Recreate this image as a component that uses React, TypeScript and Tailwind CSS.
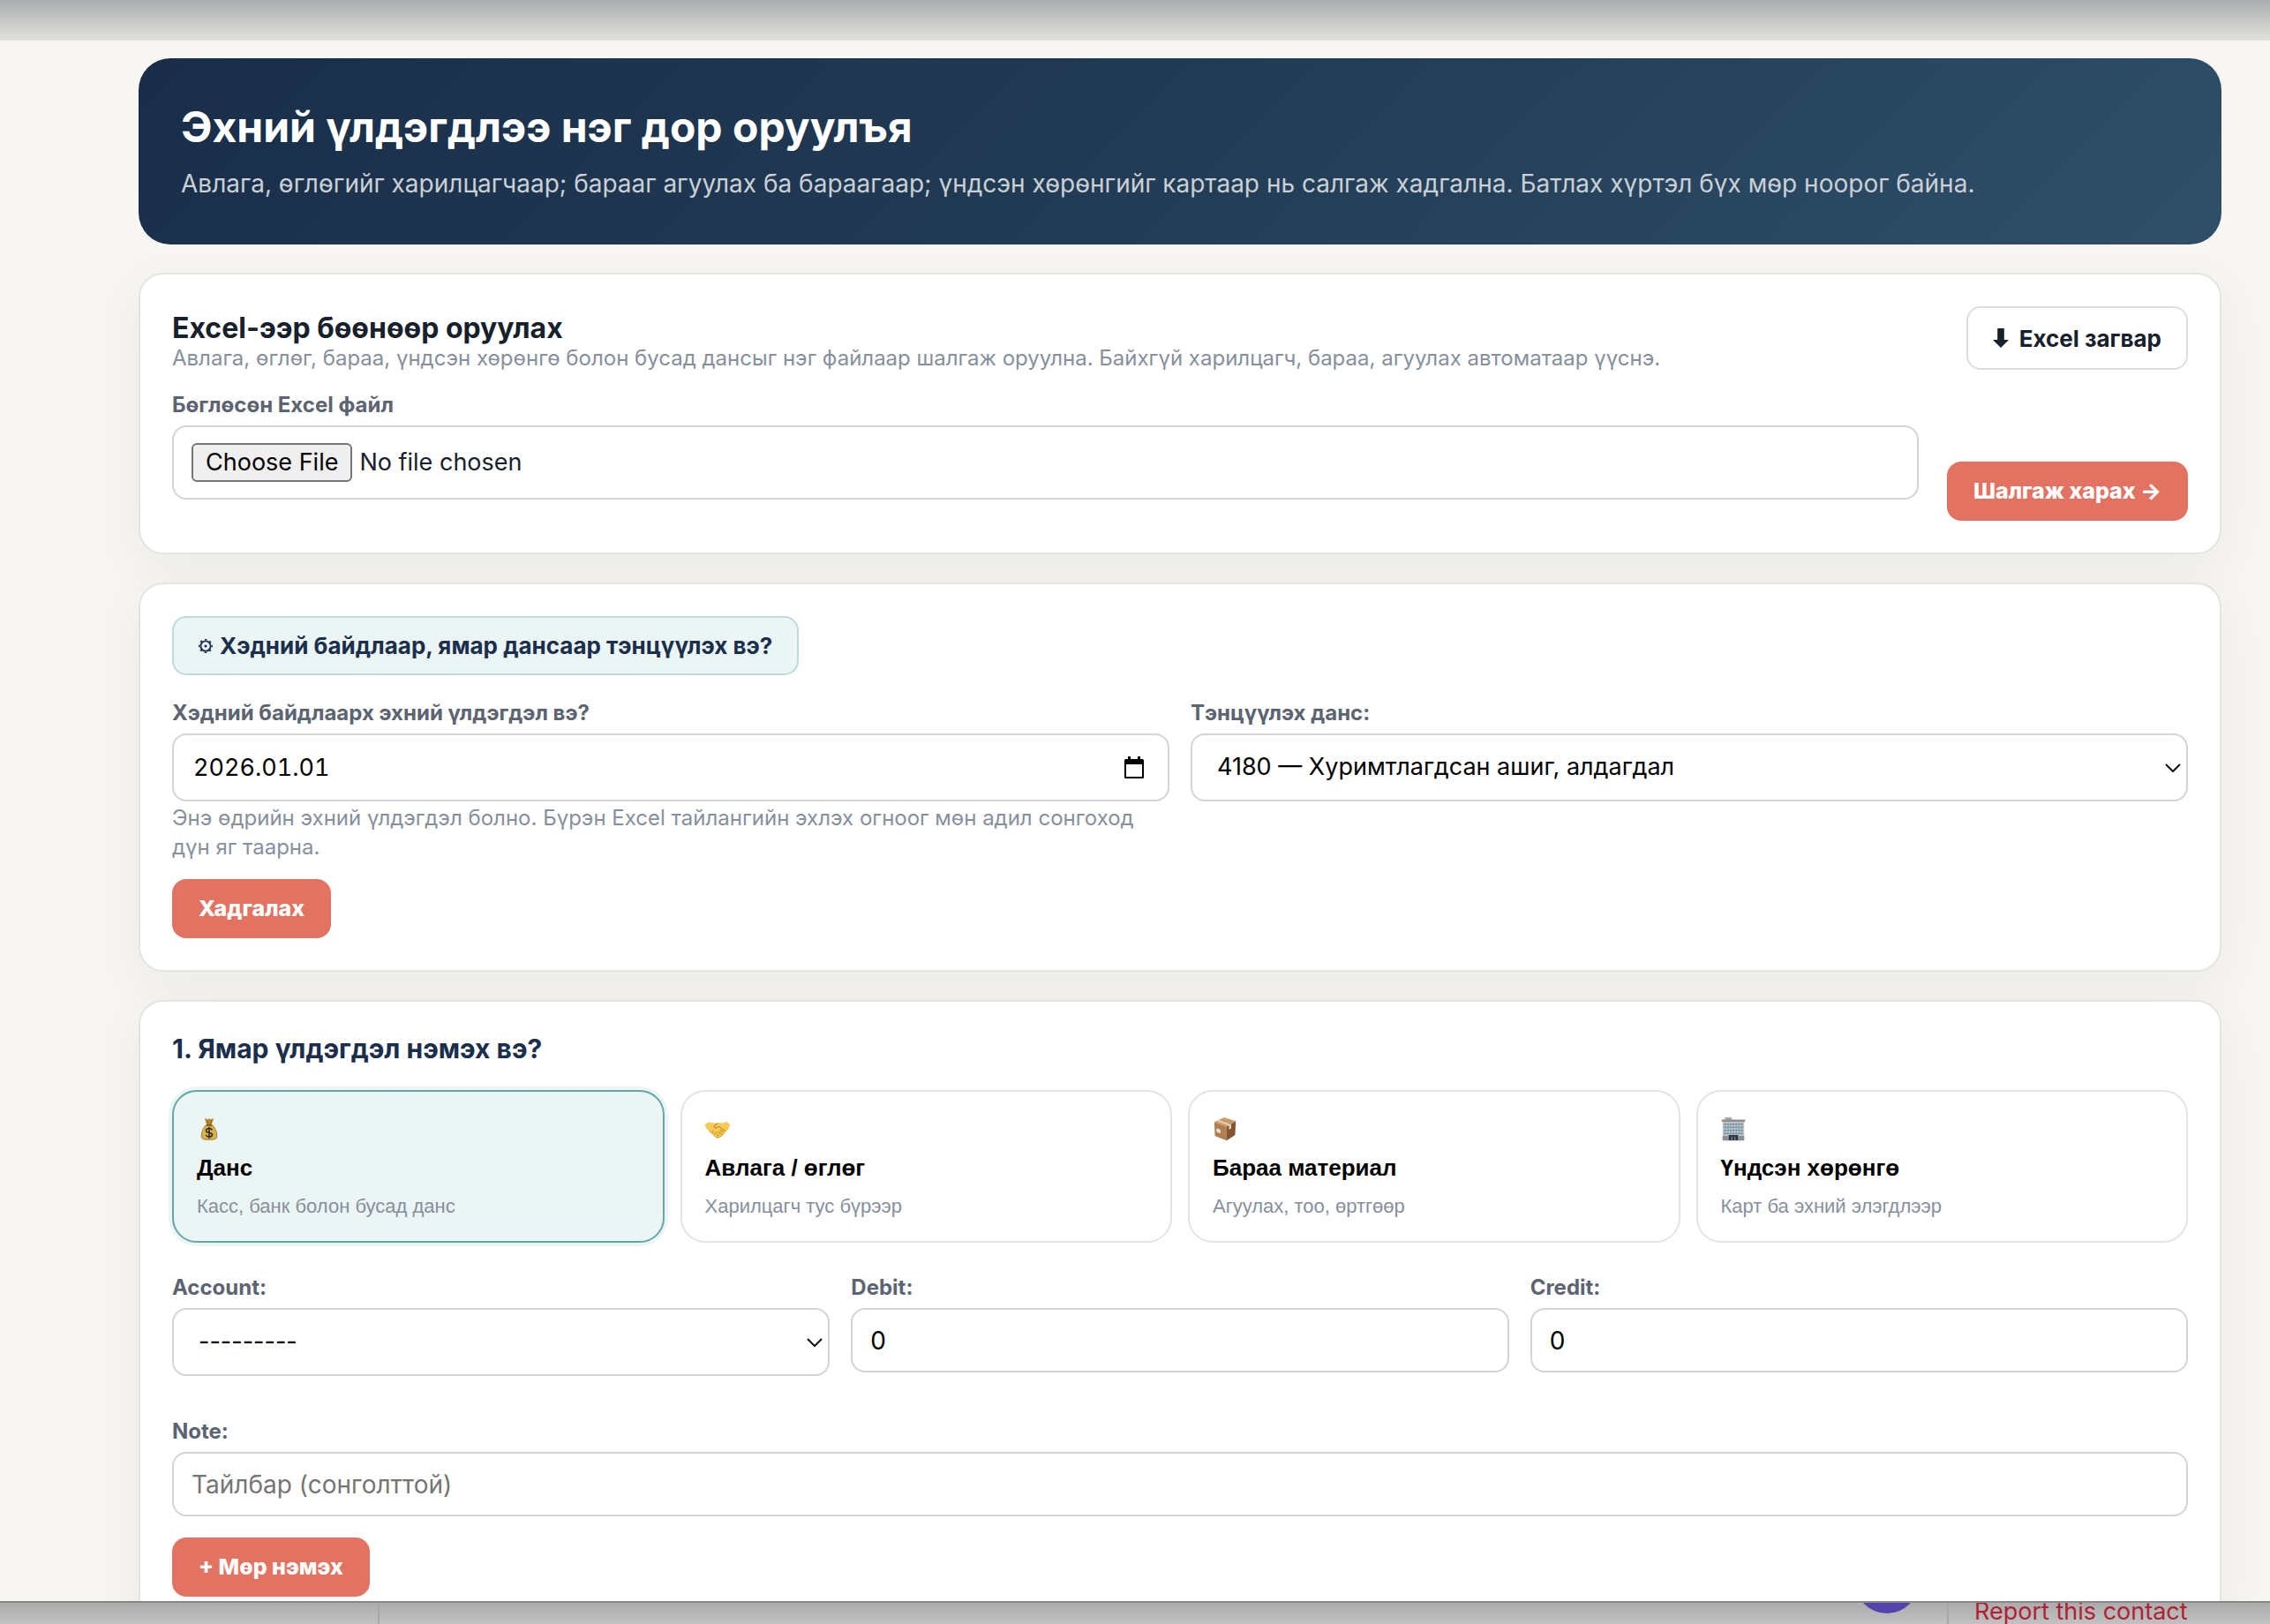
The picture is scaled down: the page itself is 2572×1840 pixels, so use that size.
import { useState } from 'react';
import type { ReactNode } from 'react';

interface EntryKind {
  id: string;
  title: string;
  hint: string;
  icon: ReactNode;
}

const MoneyBagIcon = () => (
  <svg viewBox="0 0 32 32" className="h-7 w-7" aria-hidden="true">
    <path d="M10 2l4 2 2-1.500 2 1.500 4-2-3 9h-6z" fill="#b98a35" />
    <path d="M13 4l2 7M19 4l-2 7" stroke="#7d5a1c" strokeWidth="1" />
    <path d="M12 11h8c4 4 6 9 6 14 0 4-2 5-10 5S6 29 6 25c0-5 2-10 6-14z" fill="#d9b24c" stroke="#9a7226" strokeWidth="1" />
    <path d="M12 11.500h8" stroke="#8a6420" strokeWidth="2" />
    <path d="M20 17.500c-1-1.500-2.500-2-4-2-2.200 0-4 1-4 2.800 0 4 8 1.700 8 5.200 0 1.800-1.800 2.800-4 2.800-1.800 0-3.300-.7-4.200-2.200M16 13.500v15" fill="none" stroke="#2f2d2a" strokeWidth="1.800" />
  </svg>
);

const HandshakeIcon = () => (
  <svg viewBox="0 0 32 32" className="h-7 w-7" aria-hidden="true">
    <path d="M0 10l5-3c3 1.500 6 2 9 1.500l4-.5c3 1 6 .5 9-1.500l5 3.500c0 3-2 7-4 8.500-1 1-2 2-3 3.500l-5 4.500c-2 1.500-4 1.500-5.500 0L5 18.500C2 17 0 14 0 10z" fill="#f5cb55" />
    <path d="M16 9l-5 4c1 2.500 4 2 6.500 0L26 19M9 20.500l2-2M12 23l2.500-2.500M15.500 25l2-2M20 17.500l3 3M17 19.500l3.500 3" fill="none" stroke="#c48a22" strokeWidth="1.200" strokeLinecap="round" />
    <path d="M5 18.500l8.500 8c1.500 1.500 3.500 1.500 5.500 0l5-4.500" fill="none" stroke="#c48a22" strokeWidth="1" />
  </svg>
);

const PackageIcon = () => (
  <svg viewBox="0 0 32 32" className="h-7 w-7" aria-hidden="true">
    <path d="M2 7l13-6 15 5-12 7z" fill="#c99b6b" />
    <path d="M2 7l16 6v18L3 25z" fill="#b07f50" />
    <path d="M30 6l-12 7v18l11-7z" fill="#83562f" />
    <path d="M8 4.500l16 6v5l-3 1.500v-5L5 6z" fill="#e3cfb6" />
    <path d="M5 15l5 2v5l-5-2z" fill="#e9e2d8" />
  </svg>
);

const OfficeIcon = () => (
  <svg viewBox="0 0 32 32" className="h-7 w-7" aria-hidden="true">
    <path d="M5 1h9v4H5z" fill="#a9aaa8" />
    <path d="M1 4h30v3H1z" fill="#8c8d8c" />
    <path d="M2 7h28v24H2z" fill="#c3c1ba" />
    <path d="M4 10h24M4 14h24M4 18h24M4 22h24" stroke="#5f93b5" strokeWidth="2.400" strokeDasharray="2.500 1.100" />
    <path d="M2 25h8v6H2zM22 25h8v6h-8z" fill="#8a9096" />
    <path d="M10 24h12v7H10z" fill="#2e3740" />
    <path d="M14 26v5M18 26v5" stroke="#8fa6b3" strokeWidth="1" />
  </svg>
);

const GearIcon = () => (
  <svg viewBox="0 0 16 16" className="h-4 w-4" fill="none" stroke="currentColor" aria-hidden="true">
    <circle cx="8" cy="8" r="5.600" strokeWidth="1.900" />
    <circle cx="8" cy="8" r="7.200" strokeWidth="1.600" strokeDasharray="2.400 3.255" strokeDashoffset="1.200" />
    <circle cx="8" cy="8" r="1.600" fill="currentColor" stroke="none" />
  </svg>
);

const DownArrowIcon = () => (
  <svg viewBox="0 0 18 22" className="h-[22px] w-[18px]" fill="currentColor" aria-hidden="true">
    <path d="M5.200 0h7.600v13H18l-9 9-9-9h5.200z" />
  </svg>
);

const CalendarIcon = () => (
  <svg viewBox="0 0 24 26" className="h-[26px] w-6" aria-hidden="true">
    <path d="M5 0h3v3h8V0h3v3h2.500A1.500 1.500 0 0 1 23 4.500v19a1.500 1.500 0 0 1-1.500 1.500h-19A1.500 1.500 0 0 1 1 23.500v-19A1.500 1.500 0 0 1 2.500 3H5zM3 9v14h18V9z" fill="#000" fillRule="evenodd" />
  </svg>
);

const ChevronIcon = () => (
  <svg viewBox="0 0 18 10" className="pointer-events-none absolute top-1/2 right-2 h-[10px] w-[18px] -translate-y-1/2" fill="none" stroke="#111" strokeWidth="2" aria-hidden="true">
    <path d="M1 1l8 8 8-8" />
  </svg>
);

const kinds: EntryKind[] = [
  { id: 'account', title: 'Данс', hint: 'Касс, банк болон бусад данс', icon: <MoneyBagIcon /> },
  { id: 'partner', title: 'Авлага / өглөг', hint: 'Харилцагч тус бүрээр', icon: <HandshakeIcon /> },
  { id: 'stock', title: 'Бараа материал', hint: 'Агуулах, тоо, өртгөөр', icon: <PackageIcon /> },
  { id: 'asset', title: 'Үндсэн хөрөнгө', hint: 'Карт ба эхний элэгдлээр', icon: <OfficeIcon /> },
];

const fieldClass = 'block w-full rounded-2xl border-2 border-[#d1d5d4] bg-white text-black';
const inputClass = `${fieldClass} h-[73px] px-5 text-[28px] placeholder:text-[#757575]`;
const selectClass = `${fieldClass} h-[77px] appearance-none px-7 text-[27px]`;
const labelClass = 'block text-[24px] leading-[30px] font-bold text-[#5b6470]';
const hintClass = 'text-[24px] leading-[33px] text-[#86909c]';
const primaryClass =
  'h-[67px] rounded-2xl bg-[#e27362] px-[30px] text-[25px] font-extrabold whitespace-nowrap text-white';

function Card({ children }: { children: ReactNode }) {
  return (
    <section className="rounded-[28px] border-2 border-[#e5e5df] bg-white p-9 shadow-[0_16px_60px_rgba(20,35,75,0.06)]">
      {children}
    </section>
  );
}

export default function App() {
  const [kind, setKind] = useState('account');

  return (
    <div className="flex h-screen flex-col overflow-hidden bg-[#f7f6f2] font-[Inter,sans-serif] text-[#17212b]">
      <div className="h-[46px] shrink-0 bg-linear-to-b from-[#a9adae] to-[#e3e2dd]" />

      <main className="min-h-0 flex-1 overflow-hidden pt-5 pr-[55px] pl-[157px]">
        <div className="flex flex-col gap-8">
          <header className="rounded-[36px] bg-linear-135 from-[#192d49] via-[#223c55] to-[#2f4f69] px-12 pt-12 pb-[46px]">
            <h1 className="text-[48px] leading-[60px] font-bold text-white">Эхний үлдэгдлээ нэг дор оруулъя</h1>
            <p className="mt-3 text-[28px] leading-[45px] text-[#c9d0d6]">
              Авлага, өглөгийг харилцагчаар; барааг агуулах ба бараагаар; үндсэн хөрөнгийг картаар нь салгаж хадгална. Батлах хүртэл бүх мөр ноорог байна.
            </p>
          </header>

          <Card>
            <div className="flex items-start justify-between">
              <div className="pt-2">
                <h2 className="text-[32px] leading-[34px] font-bold">Excel-ээр бөөнөөр оруулах</h2>
                <p className={hintClass}>
                  Авлага, өглөг, бараа, үндсэн хөрөнгө болон бусад дансыг нэг файлаар шалгаж оруулна. Байхгүй харилцагч, бараа, агуулах автоматаар үүснэ.
                </p>
              </div>
              <a href="#template" className="flex h-[72px] items-center gap-3 rounded-2xl border-2 border-[#dbe0df] px-7 text-[26px] font-bold whitespace-nowrap">
                <DownArrowIcon />
                Excel загвар
              </a>
            </div>
            <form className="mt-[22px] flex items-end gap-8" onSubmit={(e) => e.preventDefault()}>
              <div className="flex-1 pb-6">
                <label htmlFor="excel-file" className={labelClass}>Бөглөсөн Excel файл</label>
                <input
                  id="excel-file"
                  type="file"
                  className="mt-2 block h-[84px] w-full rounded-2xl border-2 border-[#d1d5d4] bg-white px-5 py-[18px] text-[27px] leading-10 file:mr-2 file:rounded-md file:border-2 file:border-solid file:border-[#767676] file:bg-[#efefef] file:px-[14px] file:text-black"
                />
              </div>
              <button className={primaryClass}>Шалгаж харах →</button>
            </form>
          </Card>

          <Card>
            <button className="flex h-[67px] items-center gap-2 rounded-2xl border-2 border-[#bddbd9] bg-[#ebf5f4] px-7 text-[26px] font-bold text-[#1b2f4d]">
              <GearIcon />
              Хэдний байдлаар, ямар дансаар тэнцүүлэх вэ?
            </button>
            <form onSubmit={(e) => e.preventDefault()}>
              <div className="mt-7 grid grid-cols-2 gap-6">
                <div>
                  <label htmlFor="balance-date" className={labelClass}>Хэдний байдлаарх эхний үлдэгдэл вэ?</label>
                  <div className="relative mt-2">
                    <input id="balance-date" type="text" defaultValue="2026.01.01" className={`${fieldClass} h-[77px] px-[22px] text-[27px] tabular-nums`} />
                    <span className="pointer-events-none absolute top-1/2 right-7 -translate-y-1/2">
                      <CalendarIcon />
                    </span>
                  </div>
                  <p className={`${hintClass} mt-[2px]`}>
                    Энэ өдрийн эхний үлдэгдэл болно. Бүрэн Excel тайлангийн эхлэх огноог мөн адил сонгоход дүн яг таарна.
                  </p>
                </div>
                <div>
                  <label htmlFor="balance-account" className={labelClass}>Тэнцүүлэх данс:</label>
                  <div className="relative mt-2">
                    <select id="balance-account" className={selectClass}>
                      <option>4180 — Хуримтлагдсан ашиг, алдагдал</option>
                    </select>
                    <ChevronIcon />
                  </div>
                </div>
              </div>
              <button className={`${primaryClass} mt-5`}>Хадгалах</button>
            </form>
          </Card>

          <Card>
            <h2 className="text-[30px] leading-[34px] font-bold text-[#1b2f4d]">1. Ямар үлдэгдэл нэмэх вэ?</h2>
            <div className="mt-[30px] grid grid-cols-4 gap-[18px] font-['Liberation_Sans',sans-serif]">
              {kinds.map((item) => (
                <button
                  key={item.id}
                  onClick={() => setKind(item.id)}
                  className={`flex h-[173px] flex-col items-start rounded-[28px] border-2 px-[26px] pt-7 text-left ${
                    kind === item.id
                      ? 'border-[#62a8a5] bg-[#ebf5f4] shadow-[0_0_0_4px_#ebf5f4]'
                      : 'border-[#e5e5df] bg-white'
                  }`}
                >
                  {item.icon}
                  <strong className="mt-[14px] text-[26px] leading-8 font-bold text-black">{item.title}</strong>
                  <small className="mt-[14px] text-[22px] leading-7 text-[#86909c]">{item.hint}</small>
                </button>
              ))}
            </div>

            <form onSubmit={(e) => e.preventDefault()}>
              <div className="mt-9 grid grid-cols-3 gap-6">
                <div>
                  <label htmlFor="account" className={labelClass}>Account:</label>
                  <div className="relative mt-2">
                    <select id="account" className={selectClass}>
                      <option>---------</option>
                    </select>
                    <ChevronIcon />
                  </div>
                </div>
                <div>
                  <label htmlFor="debit" className={labelClass}>Debit:</label>
                  <input id="debit" type="text" defaultValue="0" className={`${inputClass} mt-2`} />
                </div>
                <div>
                  <label htmlFor="credit" className={labelClass}>Credit:</label>
                  <input id="credit" type="text" defaultValue="0" className={`${inputClass} mt-2`} />
                </div>
              </div>
              <div className="mt-12">
                <label htmlFor="note" className={labelClass}>Note:</label>
                <input id="note" type="text" placeholder="Тайлбар (сонголттой)" className={`${inputClass} mt-2`} />
              </div>
              <button className={`${primaryClass} mt-6`}>+ Мөр нэмэх</button>
            </form>
          </Card>
        </div>
      </main>

      {/* strip of the window behind */}
      <footer className="flex h-[26px] shrink-0 overflow-hidden border-t-2 border-[#868686] bg-linear-to-b from-[#ababab] to-[#c2c2c2]">
        <div className="w-[430px] border-r-2 border-[#a6a6ac]" />
        <div className="flex flex-1 items-end justify-end overflow-hidden border-r-2 border-[#a6a6ac] pr-8 pb-3">
          <div className="h-[72px] w-[72px] shrink-0 rounded-full bg-[#5443ad]" />
        </div>
        <a href="#report" className="w-[364px] pl-[29px] text-[27px] leading-5 whitespace-nowrap text-[#b01f33]">Report this contact</a>
      </footer>
    </div>
  );
}
